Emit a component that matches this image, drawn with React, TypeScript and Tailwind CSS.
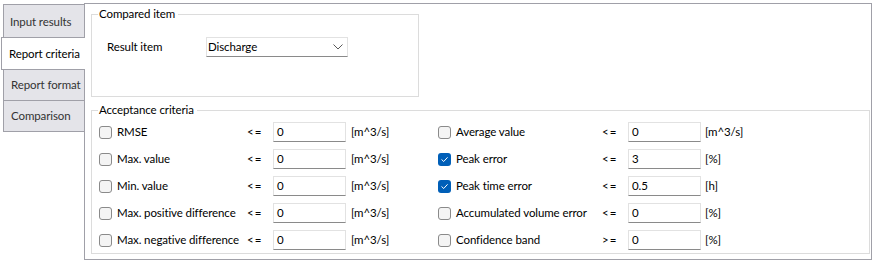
import React from "react";

function Check({ checked }: { checked: boolean }) {
  if (checked) {
    return (
      <span className="w-[13px] h-[13px] shrink-0 rounded-[3px] bg-[#005fb8] flex items-center justify-center">
        <svg width="9" height="9" viewBox="0 0 9 9">
          <path d="M1.8 4.7 L3.7 6.5 L7.3 2.6" stroke="white" strokeWidth="1" fill="none" strokeLinecap="round" strokeLinejoin="round" />
        </svg>
      </span>
    );
  }
  return <span className="w-[13px] h-[13px] shrink-0 rounded-[3px] border border-[#8a8a8a] bg-[#f4f4f4]" />;
}

function Field({ value }: { value: string }) {
  return (
    <div className="h-[20px] w-[73px] border border-[#e2e2e2] border-b-[#8a8a8a] bg-white pl-[3px] flex items-center">
      {value}
    </div>
  );
}

type Row = { label: string; op: string; value: string; unit: string; checked: boolean };

const left: Row[] = [
  { label: "RMSE", op: "<=", value: "0", unit: "[m^3/s]", checked: false },
  { label: "Max. value", op: "<=", value: "0", unit: "[m^3/s]", checked: false },
  { label: "Min. value", op: "<=", value: "0", unit: "[m^3/s]", checked: false },
  { label: "Max. positive difference", op: "<=", value: "0", unit: "[m^3/s]", checked: false },
  { label: "Max. negative difference", op: "<=", value: "0", unit: "[m^3/s]", checked: false },
];

const right: Row[] = [
  { label: "Average value", op: "<=", value: "0", unit: "[m^3/s]", checked: false },
  { label: "Peak error", op: "<=", value: "3", unit: "[%]", checked: true },
  { label: "Peak time error", op: "<=", value: "0.5", unit: "[h]", checked: true },
  { label: "Accumulated volume error", op: "<=", value: "0", unit: "[%]", checked: false },
  { label: "Confidence band", op: ">=", value: "0", unit: "[%]", checked: false },
];

export default function App() {
  return (
    <div className="w-[873px] h-[261px] bg-white flex font-['Lato',sans-serif] text-[11.5px] tracking-[-0.1px] leading-[16px] text-black">
      {/* Tabs */}
      <div className="relative z-10 w-[85px] shrink-0 pt-[4px] flex flex-col whitespace-nowrap">
        <div className="ml-[3px] h-[34px] border border-[#a0a0a8] bg-[#e4e4e9] pl-[6px] pt-[2px] flex items-center text-[#333]">
          Input results
        </div>
        <div className="-mt-px ml-[1px] h-[33px] border border-r-0 border-[#a0a0a8] bg-white pl-[7px] flex items-center">
          Report criteria
        </div>
        <div className="-mt-px ml-[3px] h-[32px] border border-[#a0a0a8] bg-[#e4e4e9] pl-[7px] flex items-center text-[#333]">
          Report format
        </div>
        <div className="-mt-px ml-[3px] h-[32px] border border-[#a0a0a8] bg-[#e4e4e9] pl-[7px] flex items-center text-[#333]">
          Comparison
        </div>
      </div>

      {/* Panel */}
      <div className="-ml-px mt-[3px] w-[788px] h-[257px] border border-[#a0a0a8] bg-white pl-[6px] flex flex-col">
        {/* Compared item */}
        <div className="relative mt-[10px] w-[328px] h-[83px] border border-[#dcdcdc] pl-[15px] pt-[22px]">
          <span className="absolute -top-[9px] left-[6px] bg-white pl-[1px] pr-[3px]">Compared item</span>
          <div className="flex items-center">
            <span className="w-[99px]">Result item</span>
            <div className="w-[142px] h-[20px] border border-[#e2e2e2] border-b-[#8a8a8a] bg-white pl-[1px] flex items-center justify-between pr-[4px]">
              <span>Discharge</span>
              <svg width="10" height="6" viewBox="0 0 10 6">
                <path d="M0.5 0.5 L5 5 L9.5 0.5" stroke="#5a5a5a" strokeWidth="1" fill="none" />
              </svg>
            </div>
          </div>
        </div>

        {/* Acceptance criteria */}
        <div className="relative mt-[13px] w-[779px] h-[144px] border border-[#dcdcdc] pl-[7px] pt-[11px]">
          <span className="absolute -top-[9px] left-[6px] bg-white pl-[1px] pr-[3px]">Acceptance criteria</span>
          <div className="grid grid-cols-[148px_26px_73px_92px_164px_26px_73px_1fr] gap-y-[7px] items-center">
            {left.map((l, i) => {
              const r = right[i];
              return (
                <React.Fragment key={i}>
                  <div className="flex items-center gap-[5px] whitespace-nowrap">
                    <Check checked={l.checked} />
                    <span>{l.label}</span>
                  </div>
                  <span className="tracking-[1px]">{l.op}</span>
                  <Field value={l.value} />
                  <span className="pl-[5px]">{l.unit}</span>
                  <div className="flex items-center gap-[5px] whitespace-nowrap">
                    <Check checked={r.checked} />
                    <span>{r.label}</span>
                  </div>
                  <span className="tracking-[1px]">{r.op}</span>
                  <Field value={r.value} />
                  <span className="pl-[4px]">{r.unit}</span>
                </React.Fragment>
              );
            })}
          </div>
        </div>
      </div>
    </div>
  );
}
